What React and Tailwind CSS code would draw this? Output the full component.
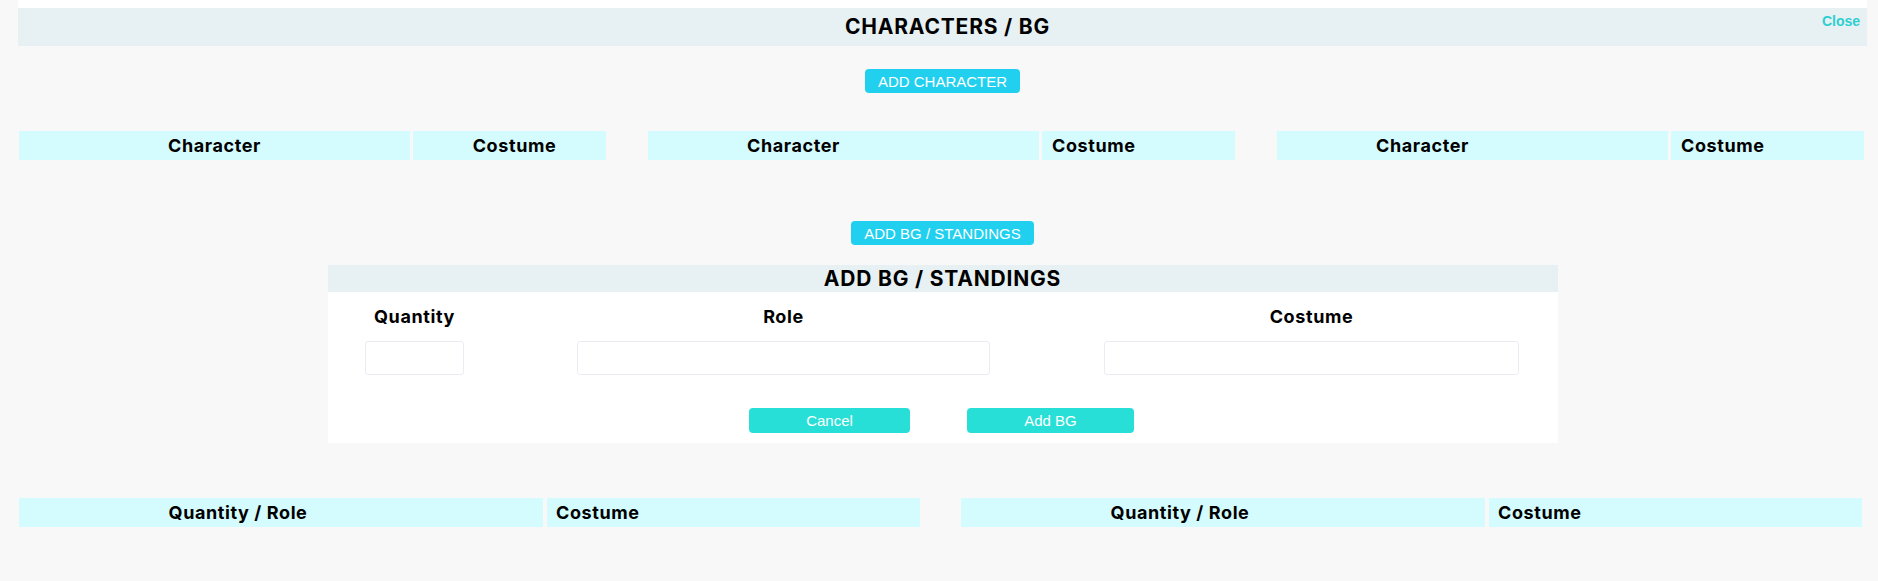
import React from 'react';

const font = { fontFamily: 'Inter, "Noto Sans", sans-serif' };
const arial = { fontFamily: '"Liberation Sans", Arial, sans-serif' };

function HeadCell({ children, className = '' }) {
  return (
    <div className={`h-[29px] flex items-center bg-[#d4fbfd] text-[18px] tracking-[0.6px] font-bold text-black ${className}`}>
      {children}
    </div>
  );
}

function CharacterTable({ shifted }) {
  return (
    <div className="flex w-[587px] gap-[3px]">
      <HeadCell className={`w-[391px] justify-center ${shifted ? 'pr-[100px]' : ''}`}>Character</HeadCell>
      <HeadCell className={`flex-1 ${shifted ? 'pl-[10px]' : 'justify-center pl-[10px]'}`}>Costume</HeadCell>
    </div>
  );
}

function BgTable() {
  return (
    <div className="flex w-[901px] gap-[4px]">
      <HeadCell className="w-[524px] justify-center pr-[86px]">Quantity / Role</HeadCell>
      <HeadCell className="flex-1 pl-[9px]">Costume</HeadCell>
    </div>
  );
}

export default function App() {
  return (
    <div className="min-h-[581px] bg-[#f8f8f8] pl-[18px] pr-[11px]" style={font}>
      <div className="h-[8px] bg-white" />
      <div className="relative h-[38px] bg-[#e7f0f2] flex items-center justify-center pl-[10px]">
        <h1 className="text-[21px] font-bold text-black tracking-[0.8px]">CHARACTERS / BG</h1>
        <button className="absolute right-[7px] top-[3px] text-[14px] font-bold text-[#2ccfd1]" style={arial}>
          Close
        </button>
      </div>

      <div className="flex justify-center mt-[23px]">
        <button className="h-[24px] px-[13px] rounded-[4px] bg-[#21d0ee] text-white text-[15px] leading-none" style={arial}>
          ADD CHARACTER
        </button>
      </div>

      <div className="flex gap-[42px] mt-[38px] pl-[1px]">
        <CharacterTable />
        <CharacterTable shifted />
        <CharacterTable shifted />
      </div>

      <div className="flex justify-center mt-[61px]">
        <button className="h-[24px] px-[13px] rounded-[4px] bg-[#21d0ee] text-white text-[15px] leading-none" style={arial}>
          ADD BG / STANDINGS
        </button>
      </div>

      <div className="mx-auto mt-[20px] w-[1230px] bg-white pb-[10px]">
        <div className="h-[27px] bg-[#e7f0f2] flex items-center justify-center">
          <h2 className="text-[21px] font-bold text-black tracking-[0.8px]">ADD BG / STANDINGS</h2>
        </div>
        <div className="grid grid-cols-[174px_564px_492px] pt-[14px]">
          {[
            ['Quantity', 'w-[99px]'],
            ['Role', 'w-[413px]'],
            ['Costume', 'w-[415px]'],
          ].map(([label, w]) => (
            <div key={label} className="flex flex-col items-center">
              <label className="h-[22px] leading-[22px] text-[18px] tracking-[0.6px] font-bold text-black">{label}</label>
              <input className={`${w} h-[34px] mt-[13px] bg-white border border-[#ebebf4] rounded-[3px] outline-none`} />
            </div>
          ))}
        </div>
        <div className="flex justify-center gap-[57px] mt-[33px] pr-[2px]">
          <button className="w-[161px] h-[25px] rounded-[4px] bg-[#28dfd8] text-white text-[15px] leading-none" style={arial}>
            Cancel
          </button>
          <button className="w-[167px] h-[25px] rounded-[4px] bg-[#28dfd8] text-white text-[15px] leading-none" style={arial}>
            Add BG
          </button>
        </div>
      </div>

      <div className="flex gap-[41px] mt-[55px] pl-[1px]">
        <BgTable />
        <BgTable />
      </div>
    </div>
  );
}
